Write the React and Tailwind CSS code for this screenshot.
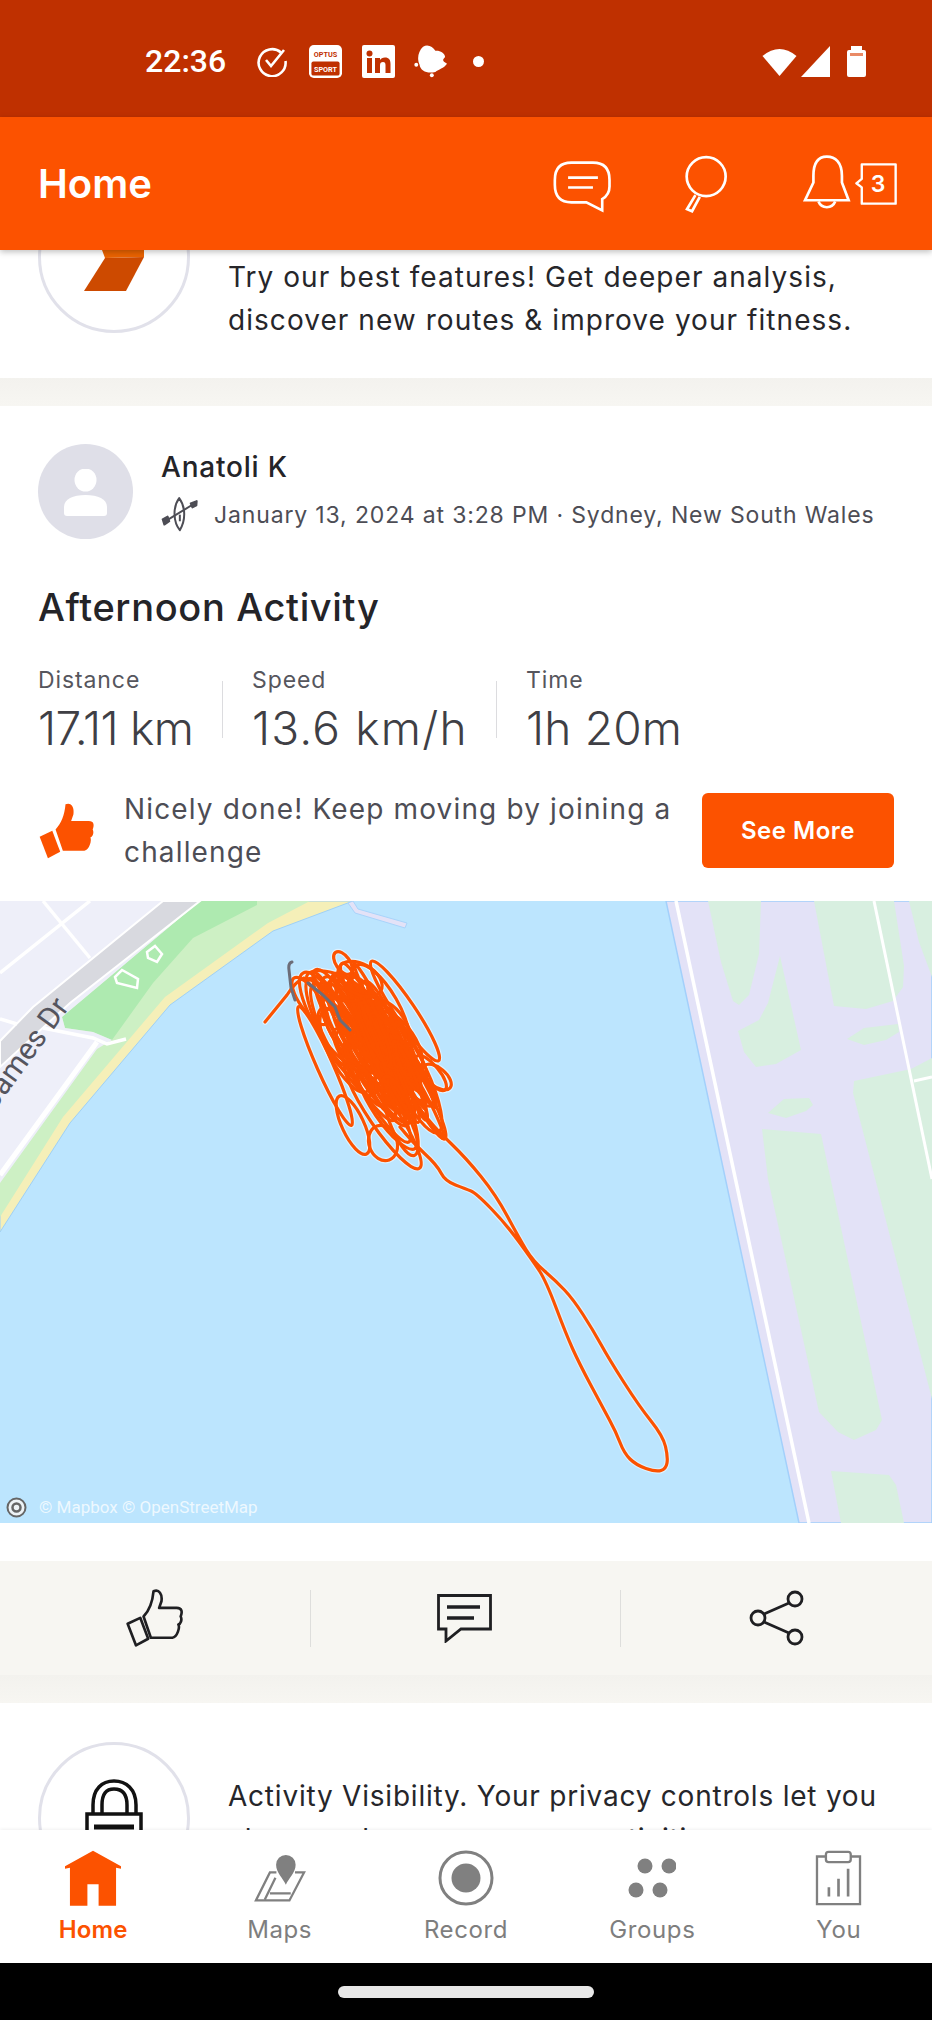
import React from 'react';

const ORANGE = '#fc5200';

// loops of the track, drawn from a fixed seed so every run gives the same picture
function buildLoops() {
  let seed = 90210;
  const rand = () => {
    seed = (seed * 1664525 + 1013904223) % 4294967296;
    return seed / 4294967296;
  };
  const loops = [];
  const rad = (60 * Math.PI) / 180;
  for (let i = 0; i < 46; i++) {
    const along = (rand() - 0.5) * 110;
    const across = (rand() - 0.5) * 62;
    loops.push({
      cx: 375 + along * Math.cos(rad) - across * Math.sin(rad),
      cy: 155 + along * Math.sin(rad) + across * Math.cos(rad),
      rx: 30 + rand() * 36,
      ry: 5 + rand() * 13,
      angle: 60 + (rand() - 0.5) * 12,
    });
  }
  // the dense core of the track lies right of the middle
  for (let i = 0; i < 34; i++) {
    const along = (rand() - 0.5) * 90;
    const across = (rand() - 0.5) * 26;
    loops.push({
      cx: 388 + along * Math.cos(rad) - across * Math.sin(rad),
      cy: 150 + along * Math.sin(rad) + across * Math.cos(rad),
      rx: 26 + rand() * 30,
      ry: 3 + rand() * 7,
      angle: 62 + (rand() - 0.5) * 14,
    });
  }
  return loops;
}

const extraLoops = [
  { cx: 343, cy: 62, rx: 13, ry: 7, angle: 55 },
  { cx: 437, cy: 176, rx: 17, ry: 9, angle: 40 },
  { cx: 431, cy: 172, rx: 22, ry: 8, angle: 50 },
  { cx: 353, cy: 224, rx: 32, ry: 11, angle: 65 },
  { cx: 383, cy: 242, rx: 18, ry: 14, angle: 70 },
  { cx: 325, cy: 165, rx: 65, ry: 8, angle: 66 },
  { cx: 405, cy: 110, rx: 60, ry: 10, angle: 56 },
  { cx: 400, cy: 215, rx: 42, ry: 12, angle: 70 },
  { cx: 335, cy: 85, rx: 30, ry: 12, angle: 20 },
  { cx: 310, cy: 100, rx: 28, ry: 10, angle: 55 },
  { cx: 360, cy: 78, rx: 24, ry: 15, angle: 30 },
];

const loops = [...buildLoops(), ...extraLoops];

const tailPoints = [
  [400, 226], [412, 241], [437, 264], [445, 280], [466, 288], [476, 292], [506, 323], [533, 360], [546, 380], [566, 433],
  [579, 462], [603, 507], [616, 531], [624, 552], [636, 564], [656, 571], [666, 568], [668, 556], [663, 535], [639, 505],
  [609, 458], [593, 429], [573, 398], [556, 380], [533, 360], [519, 337], [496, 294], [466, 257], [437, 229], [423, 212],
];

const smooth = (pts) => {
  let d = `M${pts[0][0]} ${pts[0][1]}`;
  for (let i = 1; i < pts.length - 1; i++) {
    const mx = (pts[i][0] + pts[i + 1][0]) / 2;
    const my = (pts[i][1] + pts[i + 1][1]) / 2;
    d += ` Q${pts[i][0]} ${pts[i][1]} ${mx} ${my}`;
  }
  const last = pts[pts.length - 1];
  return `${d} L${last[0]} ${last[1]}`;
};

const startTail = 'M265 121 L287 94 Q296 80 304 77 Q314 78 320 88';

function Track({ stroke, width, opacity = 1 }) {
  return (
    <g fill="none" stroke={stroke} strokeWidth={width} strokeOpacity={opacity} strokeLinecap="round" strokeLinejoin="round">
      {loops.map((l, i) => (
        <ellipse key={i} cx={l.cx} cy={l.cy} rx={l.rx} ry={l.ry} transform={`rotate(${l.angle} ${l.cx} ${l.cy})`} />
      ))}
      <path d={smooth(tailPoints)} />
      <path d={startTail} />
    </g>
  );
}

function MapDrawing() {
  return (
    <svg width="932" height="622" viewBox="0 0 932 622" className="block">
      <rect width="932" height="622" fill="#bce5fe" />

      {/* west side */}
      <path d="M0 0H353L273 30L170 104L70 222L0 331Z" fill="#f5efb8" stroke="#9fd0f5" strokeWidth="1" />
      <path d="M0 0H310L268 22L165 96L63 216L0 316Z" fill="#cdf0c4" />
      <path d="M257 0H200L62 116L65 127L93 131L112 139L153 82L193 37L257 4Z" fill="#aeeab0" />
      <path d="M0 0H200L62 116L65 127L93 131L112 139L97 148L0 282Z" fill="#eeeff9" />
      <path d="M0 140L33 106L163 0H200L70 102L0 166Z" fill="#d8d9df" stroke="#fff" strokeWidth="2" />
      <g fill="none" stroke="#fff" strokeWidth="3.5">
        <path d="M43 0L90 57" />
        <path d="M90 0L0 72" />
        <path d="M0 118L17 123" />
        <path d="M43 127L93 137L107 143L126 138" />
        <path d="M97 141L0 274" strokeWidth="5" />
      </g>
      <path d="M115 76L122 69L138 78L137 87L117 82Z M147 51L155 45L162 53L157 61L148 57Z" fill="none" stroke="#fff" strokeWidth="2.5" />
      <path d="M348 2L355 12L405 27L407 22L358 8L353 0Z" fill="#e3e2f7" stroke="#a9d4fb" strokeWidth="1" />
      <text x="70" y="106" textAnchor="end" transform="rotate(-54 70 106)" fontFamily="Roboto, sans-serif" fontSize="30" fill="#55555e">
        James Dr
      </text>

      {/* east side */}
      <path d="M666 0H932V622H799Z" fill="#e3e2f7" stroke="#a3d0fb" strokeWidth="1.5" />
      <g fill="#d8efe0">
        <path d="M708 0H761L759 53L749 94L739 104L733 100L721 61Z" />
        <path d="M780 55L801 149L776 163L756 166L744 151L738 130L759 119L768 102Z" />
        <path d="M814 0H894L904 65L903 86L893 100L866 108L834 105Z" />
        <path d="M847 138L864 127L898 123L899 131L886 139L864 144Z" />
        <path d="M909 0H932V76L919 41Z" />
        <path d="M854 180L911 168L932 157V498L853 192Z" />
        <path d="M762 228L821 233L882 519L876 529L854 539L838 531L819 511L768 278Z" />
        <path d="M768 212L784 198L809 197L813 204L806 210L786 217Z" />
        <path d="M831 570L889 574L896 584L904 622H841Z" />
      </g>
      <path d="M676 0L809 622" stroke="#fff" strokeWidth="3.5" />
      <path d="M874 0L932 278" stroke="#fff" strokeWidth="3" />
      <path d="M914 180L932 176" stroke="#fff" strokeWidth="3" />

      {/* activity track */}
      <Track stroke="#ffffff" width={5.5} opacity={0.5} />
      <Track stroke={ORANGE} width={3.2} />
      <path d="M292 61Q288 62 289 69L291 87L295 99M308 82L323 94L335 106L340 119L350 129" fill="none" stroke="#6d6d78" strokeWidth="3" strokeLinecap="round" />
    </svg>
  );
}

function ThumbIcon({ outline }) {
  const hand = 'M78 118C95 100 105 75 108 42C125 35 135 50 132 72L125 92L178 92C195 92 195 105 190 118C195 128 190 140 183 142C188 150 180 180 165 182L100 182Z';
  const cuff = 'M30 140L68 122L92 185L55 205Z';
  if (outline) {
    return (
      <svg width="58" height="58" viewBox="25 35 175 175" fill="none" stroke="#1f1f22" strokeWidth="8" strokeLinejoin="round">
        <path d={hand} />
        <path d={cuff} />
      </svg>
    );
  }
  return (
    <svg width="58" height="58" viewBox="25 35 175 175" fill={ORANGE}>
      <path d={hand} />
      <path d={cuff} />
    </svg>
  );
}

function StatusBar() {
  return (
    <div className="flex h-[117px] shrink-0 items-center bg-[#bf3000] pl-[145px] pr-[66px] pt-[5px] text-white">
      <span className="w-[81px] font-['Roboto',sans-serif] text-[32px] font-medium leading-none">22:36</span>
      <svg width="32" height="32" viewBox="0 0 32 32" fill="none" stroke="#fff" strokeWidth="2.6" className="ml-[30px]">
        <path d="M25 7.5A13.5 13.5 0 1 0 29.5 16" />
        <path d="M10 15L15 21L28 5" />
      </svg>
      <svg width="33" height="33" viewBox="0 0 34 34" className="ml-[21px]">
        <rect width="34" height="34" rx="5" fill="#fff" />
        <rect x="2.5" y="17" width="29" height="14.5" rx="2" fill="#bf3000" />
        <text x="17" y="12.5" textAnchor="middle" fontFamily="Roboto, sans-serif" fontWeight="700" fontSize="7.5" fill="#bf3000">OPTUS</text>
        <text x="17" y="27.5" textAnchor="middle" fontFamily="Roboto, sans-serif" fontWeight="700" fontSize="7.5" fill="#fff">SPORT</text>
      </svg>
      <svg width="33" height="33" viewBox="0 0 33 33" className="ml-[20px]">
        <rect width="33" height="33" rx="2" fill="#fff" />
        <circle cx="7.5" cy="8.5" r="3" fill="#bf3000" />
        <rect x="5" y="13" width="5" height="15" fill="#bf3000" />
        <path d="M13 13H18V15C19 13.5 20.5 12.6 23 12.6C27 12.6 28.5 15 28.5 19V28H23.5V20C23.5 18 22.8 17 21 17C19 17 18 18.2 18 20.2V28H13Z" fill="#bf3000" />
      </svg>
      <svg width="34" height="33" viewBox="850 45 105 97" preserveAspectRatio="none" fill="#fff" className="ml-[19px]">
        <path d="M878 50C893 42 908 50 916 62C928 60 946 68 946 80C938 88 936 92 952 100C942 114 926 116 916 124C892 130 870 122 867 102C858 85 864 62 878 50Z" />
        <circle cx="857" cy="103" r="6" />
        <circle cx="905" cy="134" r="6" />
      </svg>
      <span className="ml-[25px] h-[11px] w-[11px] rounded-full bg-white" />
      <div className="ml-auto flex items-center">
        <svg width="35" height="30" viewBox="0 0 35 30" fill="#fff">
          <path d="M0.5 10Q17.5 -4 34.5 10L17.5 30Z" />
        </svg>
        <svg width="30" height="31" viewBox="0 0 30 31" fill="#fff" className="ml-[4px]">
          <path d="M29 0V31H0Z" />
        </svg>
        <svg width="19" height="31" viewBox="0 0 19 31" className="ml-[16px]">
          <path d="M4 0H15V4H17Q19 4 19 6V29Q19 31 17 31H2Q0 31 0 29V6Q0 4 2 4H4Z" fill="#fff" />
          <rect x="3" y="7" width="13" height="3" fill="#e98a66" />
        </svg>
      </div>
    </div>
  );
}

function Header() {
  return (
    <div className="relative z-10 flex h-[133px] shrink-0 items-center bg-[#fc5200] pl-[38px] pr-[34px] shadow-[0_2px_6px_rgba(0,0,0,0.25)]">
      <span className="font-['Inter',sans-serif] text-[40px] font-semibold leading-none text-white">Home</span>
      <div className="ml-auto flex items-center text-white">
        <svg width="60" height="53" viewBox="40 60 180 160" fill="none" stroke="#fff" strokeWidth="8" strokeLinejoin="miter" className="mt-[6px]">
          <path d="M95 68H160Q210 68 210 120V140Q210 165 188 178V212L140 188H95Q45 188 45 135V120Q45 68 95 68Z" />
          <path d="M85 113H175L170 113M85 143H160" />
        </svg>
        <svg width="43" height="58" viewBox="434 46 128 172" fill="none" stroke="#fff" strokeWidth="8" className="ml-[72px]">
          <circle cx="497" cy="110" r="58" />
          <path d="M465 165L440 207L455 213L478 170" />
        </svg>
        <svg width="50" height="57" viewBox="788 48 145 170" fill="none" stroke="#fff" strokeWidth="8" className="ml-[74px]">
          <path d="M820 110C820 70 835 53 860 53C885 53 905 70 905 110V130L925 183H795L820 130Z" />
          <path d="M835 187A27 27 0 0 0 885 187" />
        </svg>
        <svg width="44" height="42" viewBox="948 68 124 124" className="ml-[2px]">
          <path d="M968 72H1068V188H968V140L952 128L968 115Z" fill="none" stroke="#fff" strokeWidth="7" strokeLinejoin="round" />
          <text x="1016" y="155" textAnchor="middle" fontFamily="Inter, sans-serif" fontWeight="600" fontSize="68" fill="#fff">3</text>
        </svg>
      </div>
    </div>
  );
}

function GrayBand() {
  return <div className="h-[28px] bg-gradient-to-b from-[#f3f2ee] to-[#f7f6f2]" />;
}

function Circle({ children, className = '' }) {
  return (
    <div className={`h-[152px] w-[152px] shrink-0 overflow-hidden rounded-full border-[3px] border-[#e1e1ea] bg-white ${className}`}>
      {children}
    </div>
  );
}

function PromoCard() {
  return (
    <section className="-mt-[69px] flex h-[197px] bg-white pl-[38px]">
      <Circle>
        <svg width="60" height="43" viewBox="0 0 60 43" className="ml-[43px] mt-[66px]">
          <path d="M18 0H60V7L21 8Z" fill="#ea6300" />
          <path d="M21 8L60 7L42 41H0Z" fill="#cd4a00" />
        </svg>
      </Circle>
      <p className="ml-[38px] mt-[75px] whitespace-nowrap text-[28px] leading-[43px] tracking-[1.05px] text-[#26262a]">
        Try our best features! Get deeper analysis,
        <br />
        discover new routes &amp; improve your fitness.
      </p>
    </section>
  );
}

function Stat({ label, value, className = '', valueClass = '' }) {
  return (
    <div className={className}>
      <div className="text-[23px] leading-[28px] tracking-[0.9px] text-[#56565d]">{label}</div>
      <div className={`mt-[6px] text-[46px] font-light leading-[56px] text-[#3f3f45] ${valueClass}`}>{value}</div>
    </div>
  );
}

function ActivityCard() {
  return (
    <section className="bg-white">
      <div className="flex pl-[38px] pt-[38px]">
        <div className="relative h-[95px] w-[95px] shrink-0 rounded-full bg-[#dfdfe8]">
          <svg width="43" height="47" viewBox="0 0 43 47" fill="#fff" className="absolute left-[26px] top-[25px]">
            <ellipse cx="21.5" cy="11" rx="11" ry="11.5" />
            <path d="M0 44V38C0 30 9 26 21.5 26C34 26 43 30 43 38V44Q43 47 40 47H3Q0 47 0 44Z" />
          </svg>
        </div>
        <div className="ml-[28px]">
          <div className="mt-[6px] text-[28px] font-medium leading-[34px] tracking-[0.8px] text-[#242428]">Anatoli K</div>
          <div className="mt-[13px] flex items-center">
            <svg width="38" height="35" viewBox="395 25 115 105" fill="none" stroke="#4d4d55" strokeWidth="6" strokeLinejoin="round">
              <path d="M450 28C470 55 470 95 452 125C432 100 430 55 450 28Z" />
              <path d="M405 100L495 45" />
              <path d="M400 92L415 84L420 98L405 108Z M485 44L503 37L502 50L490 56Z" fill="#4d4d55" />
              <path d="M452 78V98" />
            </svg>
            <span className="ml-[15px] whitespace-nowrap text-[23px] leading-[34px] tracking-[0.85px] text-[#4d4d55]">
              January 13, 2024 at 3:28 PM · Sydney, New South Wales
            </span>
          </div>
        </div>
      </div>

      <h2 className="mt-[44px] pl-[38px] text-[38px] font-medium leading-[48px] tracking-[0.65px] text-[#242428]">Afternoon Activity</h2>

      <div className="mt-[35px] flex items-end pl-[38px]">
        <Stat label="Distance" value="17.11 km" valueClass="tracking-[-0.7px]" className="w-[184px] whitespace-nowrap" />
        <div className="mb-[18px] h-[57px] w-px bg-[#dcdcdf]" />
        <Stat label="Speed" value="13.6 km/h" valueClass="tracking-[1.2px]" className="w-[273px] whitespace-nowrap pl-[29px]" />
        <div className="mb-[18px] h-[57px] w-px bg-[#dcdcdf]" />
        <Stat label="Time" value="1h 20m" valueClass="tracking-[0.2px]" className="whitespace-nowrap pl-[29px]" />
      </div>

      <div className="mt-[37px] flex h-[75px] items-center pl-[38px] pr-[38px]">
        <ThumbIcon />
        <p className="ml-[28px] whitespace-nowrap text-[28px] leading-[43px] tracking-[1.15px] text-[#4d4d55]">
          Nicely done! Keep moving by joining a
          <br />
          challenge
        </p>
        <button className="ml-auto h-[75px] w-[192px] rounded-[6px] bg-[#fc5200] text-[24px] font-semibold tracking-[0.5px] text-white">See More</button>
      </div>

      <div className="relative mt-[33px] h-[622px]">
        <MapDrawing />
        <div className="absolute bottom-[5px] left-[6px] flex items-center">
          <svg width="21" height="21" viewBox="0 0 21 21">
            <circle cx="10.5" cy="10.5" r="9" fill="#eef3f6" stroke="#666" strokeWidth="2" />
            <circle cx="10.5" cy="10.5" r="4" fill="none" stroke="#666" strokeWidth="2.5" />
          </svg>
          <span className="ml-[12px] font-['Roboto',sans-serif] text-[17px] leading-none text-white/75">© Mapbox © OpenStreetMap</span>
        </div>
      </div>

      <div className="mt-[38px] grid h-[114px] grid-cols-3 items-center bg-[#f7f6f2]">
        <div className="flex h-[57px] items-center justify-center border-r border-[#dededc]">
          <ThumbIcon outline />
        </div>
        <div className="flex h-[57px] items-center justify-center border-r border-[#dededc]">
          <svg width="56" height="49" viewBox="0 0 56 49" fill="none" stroke="#1f1f22" strokeWidth="2.8">
            <path d="M1.5 1.5H53.5V35H24L9 47V35H1.5Z" />
            <path d="M10 13H43M10 24H37" strokeWidth="3.5" />
          </svg>
        </div>
        <div className="flex items-center justify-center">
          <svg width="56" height="56" viewBox="0 0 56 56" fill="none" stroke="#1f1f22" strokeWidth="2.8">
            <circle cx="46" cy="9" r="7" />
            <circle cx="9" cy="28" r="7" />
            <circle cx="46" cy="47" r="7" />
            <path d="M40 13L15 24M15 32L40 43" />
          </svg>
        </div>
      </div>
    </section>
  );
}

function VisibilityCard() {
  return (
    <section className="flex bg-white pl-[38px] pt-[39px]">
      <Circle>
        <svg width="58" height="92" viewBox="0 0 58 92" fill="none" stroke="#111" strokeWidth="3.5" className="ml-[44px] mt-[34px]">
          <path d="M8 35V26C8 10 17 2 29 2C41 2 51 10 51 26V35" />
          <path d="M17 35V26C17 15 21 10 29 10C37 10 42 15 42 26V35" />
          <rect x="2" y="35" width="54" height="55" />
          <path d="M9 48H49" strokeWidth="5" />
        </svg>
      </Circle>
      <p className="ml-[38px] mt-[33px] whitespace-nowrap text-[28px] leading-[43px] tracking-[0.78px] text-[#26262a]">
        Activity Visibility. Your privacy controls let you
        <br />
        choose who can see your activities.
      </p>
    </section>
  );
}

function NavItem({ label, active, children }) {
  return (
    <div className="flex flex-col items-center pt-[19px]">
      <div className="flex h-[57px] items-center justify-center">{children}</div>
      <span className={`mt-[9px] text-[24px] leading-[30px] ${active ? 'font-semibold tracking-[0.2px] text-[#fc5200]' : 'tracking-[0.6px] text-[#7e7e7e]'}`}>{label}</span>
    </div>
  );
}

function BottomNav() {
  return (
    <nav className="relative z-10 grid h-[133px] shrink-0 grid-cols-5 bg-white shadow-[0_-1px_3px_rgba(0,0,0,0.06)]">
      <NavItem label="Home" active>
        <svg width="58" height="56" viewBox="72 26 176 170" fill={ORANGE}>
          <path d="M75 75L160 28L245 75V83L230 80V195H177V130H143V195H90V80L75 83Z" />
        </svg>
      </NavItem>
      <NavItem label="Maps">
        <svg width="54" height="50" viewBox="636 26 166 150" fill="none" stroke="#808080" strokeWidth="7">
          <path d="M708 84H688L645 170H748L793 84H765" />
          <path d="M705 100L672 168M688 148H752" />
          <path d="M737 122C728 100 707 85 707 60A30 30 0 0 1 767 60C767 85 746 100 737 122Z" fill="#808080" stroke="none" />
        </svg>
      </NavItem>
      <NavItem label="Record">
        <svg width="56" height="56" viewBox="0 0 56 56">
          <circle cx="28" cy="28" r="26" fill="none" stroke="#808080" strokeWidth="3" />
          <circle cx="28" cy="28" r="14.5" fill="#808080" />
        </svg>
      </NavItem>
      <NavItem label="Groups">
        <svg width="48" height="40" viewBox="0 0 48 40" fill="#808080">
          <circle cx="17" cy="8" r="7.5" />
          <circle cx="41" cy="8" r="7.5" />
          <circle cx="8" cy="32" r="7.5" />
          <circle cx="32" cy="32" r="7.5" />
        </svg>
      </NavItem>
      <NavItem label="You">
        <svg width="47" height="56" viewBox="1005 28 142 168" fill="none" stroke="#808080" strokeWidth="7">
          <path d="M1038 47H1011V191H1141V47H1113" />
          <rect x="1038" y="33" width="75" height="31" rx="8" />
          <path d="M1047 168V140M1076 168V114M1105 168V84" strokeWidth="8" />
        </svg>
      </NavItem>
    </nav>
  );
}

export default function App() {
  return (
    <div className="flex h-[2020px] w-[932px] flex-col overflow-hidden bg-white font-['Inter',sans-serif]">
      <StatusBar />
      <Header />
      <main className="min-h-0 flex-1 overflow-hidden">
        <PromoCard />
        <GrayBand />
        <ActivityCard />
        <GrayBand />
        <VisibilityCard />
      </main>
      <BottomNav />
      <div className="flex h-[57px] shrink-0 items-center justify-center bg-black">
        <div className="h-[12px] w-[256px] rounded-full bg-[#e8e8e8]" />
      </div>
    </div>
  );
}
